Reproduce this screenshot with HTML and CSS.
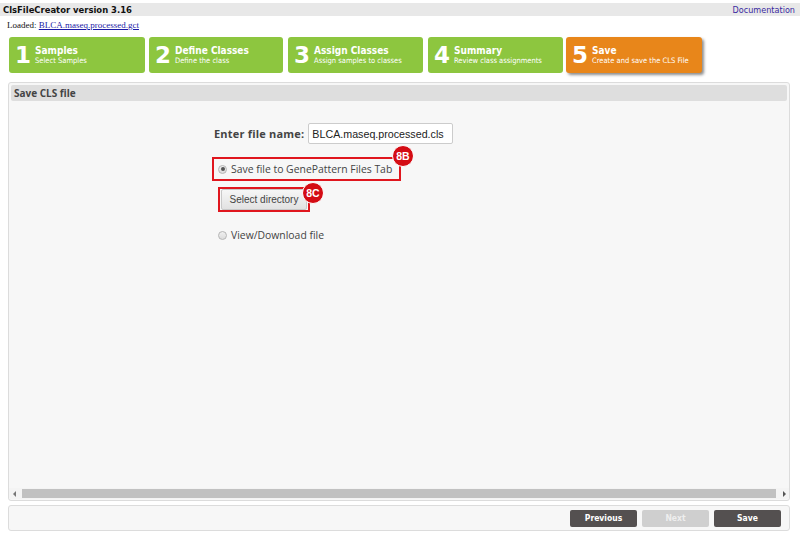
FILE: index.html
```html
<!DOCTYPE html>
<html>
<head>
<meta charset="utf-8">
<link rel="stylesheet" href="styles.css">
</head>
<body>
<div class="page">
  <div class="topbar">
    <span class="app-title">ClsFileCreator version 3.16</span>
    <a class="doc-link" href="#">Documentation</a>
  </div>
  <div class="loaded">Loaded: <a href="#">BLCA.maseq.processed.gct</a></div>
  <div class="steps">
    <div class="step s1"><span class="num">1</span><div class="st"><div class="st-title">Samples</div><div class="st-sub">Select Samples</div></div></div>
    <div class="step s2"><span class="num">2</span><div class="st"><div class="st-title">Define Classes</div><div class="st-sub">Define the class</div></div></div>
    <div class="step s3"><span class="num">3</span><div class="st"><div class="st-title">Assign Classes</div><div class="st-sub">Assign samples to classes</div></div></div>
    <div class="step s4"><span class="num">4</span><div class="st"><div class="st-title">Summary</div><div class="st-sub">Review class assignments</div></div></div>
    <div class="step active"><span class="num">5</span><div class="st"><div class="st-title">Save</div><div class="st-sub">Create and save the CLS File</div></div></div>
  </div>
  <div class="panel">
    <div class="panel-head">Save CLS file</div>
    <div class="panel-body">
      <div class="form">
        <div class="row-name">
          <label class="lbl">Enter file name:</label>
          <input class="fname" type="text" value="BLCA.maseq.processed.cls">
        </div>
        <div class="hl hl-b">
          <label class="radio"><span class="rad checked"></span>Save file to GenePattern Files Tab</label>
          <span class="badge badge-b">8B</span>
        </div>
        <div class="hl hl-c">
          <button class="btn-dir">Select directory</button>
          <span class="badge badge-c">8C</span>
        </div>
        <label class="radio view"><span class="rad"></span>View/Download file</label>
      </div>
    </div>
    <div class="hscroll">
      <span class="arrow left"></span>
      <div class="thumb"></div>
      <span class="arrow right"></span>
    </div>
  </div>
  <div class="footer">
    <button class="fbtn">Previous</button>
    <button class="fbtn disabled">Next</button>
    <button class="fbtn">Save</button>
  </div>
</div>
</body>
</html>
```
FILE: styles.css
```css
html, body { margin: 0; padding: 0; background: #fff; }
body { font-family: "DejaVu Sans", Verdana, sans-serif; width: 800px; height: 534px; overflow: hidden; }
.page { padding-top: 3px; }
.topbar {
  height: 13px; background: #e8e8e8; display: flex; justify-content: space-between;
  align-items: center; padding: 0 5px 0 3px;
}
.app-title { font-family: "DejaVu Sans Condensed", "DejaVu Sans", sans-serif; font-stretch: condensed; font-weight: bold; font-size: 9.4px; color: #111; }
.doc-link { font-family: "DejaVu Sans Condensed", "DejaVu Sans", sans-serif; font-stretch: condensed; font-size: 9px; color: #3a2aa0; text-decoration: none; }
.loaded { font-family: "Liberation Serif", serif; font-size: 9px; padding: 4px 0 0 7px; height: 14px; color: #111; }
.loaded a { color: #1a1aa6; }
.steps { display: flex; padding: 3px 0 0 9px; height: 37px; }
.step {
  background: #8dc63f; border-radius: 3px; display: flex; align-items: center;
  height: 36px; color: #fff; padding-left: 6px; box-sizing: border-box;
  font-family: "DejaVu Sans Condensed", "DejaVu Sans", sans-serif; font-stretch: condensed;
}
.s1 { width: 136px; }
.s2 { width: 134px; margin-left: 4px; }
.s3 { width: 135px; margin-left: 5px; }
.s4 { width: 135px; margin-left: 5px; }
.step.active { background: #e8861a; width: 136px; margin-left: 3px; box-shadow: 2px 2px 3px rgba(0,0,0,0.45); }
.num { font-family: "DejaVu Sans", sans-serif; font-stretch: normal; font-weight: bold; font-size: 23px; line-height: 1; margin-right: 4px; margin-top: 1px; }
.st { display: flex; flex-direction: column; }
.st-title { font-weight: bold; font-size: 10px; line-height: 11px; }
.st-sub { font-size: 7.5px; line-height: 9px; white-space: nowrap; }
.panel {
  margin: 8px 10px 0 8px; border: 1px solid #dcdcdc; border-radius: 3px;
  background: #f7f7f7; height: 419px; display: flex; flex-direction: column; box-sizing: border-box;
}
.panel-head {
  margin: 2px 2px 0 2px; height: 16px; background: #dedede; font-weight: bold;
  font-family: "Open Sans", sans-serif;
  font-size: 10px; color: #444; padding-left: 3px; line-height: 16px; border-radius: 2px;
}
.panel-body { flex: 1; position: relative; }
.form { position: absolute; left: 205px; top: 22px; font-family: "Open Sans", sans-serif; }
.row-name { display: flex; align-items: center; }
.lbl { font-weight: bold; font-size: 11px; color: #444; margin-right: 4px; letter-spacing: 0.2px; }
.fname {
  width: 145px; height: 21px; box-sizing: border-box; border: 1px solid #ccc; border-radius: 2px;
  font-family: "Liberation Sans", Arial, sans-serif; font-size: 10.7px; color: #222; padding: 0 3px;
  background: #fff;
}
.hl { position: relative; border: 2px solid #e0161e; box-sizing: border-box; display: flex; align-items: center; }
.hl-b { margin: 13px 0 0 -2px; width: 189px; height: 24px; padding-left: 4px; }
.hl-c { margin: 6px 0 0 4px; width: 92px; height: 25px; padding-left: 1px; }
.radio { display: flex; align-items: center; font-size: 10.4px; color: #444; white-space: nowrap; }
.rad {
  width: 7px; height: 7px; border-radius: 50%; border: 1px solid #b5b5b5;
  background: linear-gradient(#f0f0f0, #dcdcdc); margin-right: 4px; position: relative; flex: none;
}
.rad.checked::after {
  content: ""; position: absolute; left: 1.5px; top: 1.5px; width: 4px; height: 4px; border-radius: 50%; background: #555;
}
.view { margin: 16px 0 0 4px; }
.btn-dir {
  width: 86px; height: 21px; border: 1px solid #c8c8c8; border-radius: 2px;
  background: linear-gradient(#f6f6f6, #e2e2e2); font-family: "Liberation Sans", Arial, sans-serif;
  font-size: 10px; color: #444; padding: 0;
}
.badge {
  position: absolute; border-radius: 50%; background: #d40c14; color: #fff;
  font-family: "Liberation Sans", Arial, sans-serif; font-weight: bold; font-size: 10.5px;
  display: flex; align-items: center; justify-content: center; border: 1px solid #fff; box-sizing: border-box;
  width: 22px; height: 22px;
}
.badge-b { right: -15px; top: -14px; }
.badge-c { right: -16px; top: -7px; }
.hscroll { height: 11px; display: flex; align-items: center; background: #f4f4f4; margin-bottom: 1px; }
.thumb { flex: 1; height: 9px; background: #c1c1c1; margin: 0 3px; }
.arrow { width: 10px; display: flex; justify-content: center; }
.arrow.left::before { content: ""; border-right: 3px solid #777; border-top: 3px solid transparent; border-bottom: 3px solid transparent; }
.arrow.right::before { content: ""; border-left: 3px solid #555; border-top: 3px solid transparent; border-bottom: 3px solid transparent; }
.footer {
  margin: 4px 10px 0 8px; height: 26px; border: 1px solid #dcdcdc; border-radius: 3px; background: #f7f7f7;
  box-sizing: border-box; display: flex; justify-content: flex-end; align-items: center; gap: 5px; padding-right: 8px;
}
.fbtn {
  width: 67px; height: 17px; border: none; border-radius: 2px; background: #545050; color: #fff;
  font-family: "DejaVu Sans Condensed", "DejaVu Sans", sans-serif; font-stretch: condensed; font-weight: bold; font-size: 8.5px; padding: 0;
}
.fbtn.disabled { background: #cfcfcf; color: #eee; }
```
